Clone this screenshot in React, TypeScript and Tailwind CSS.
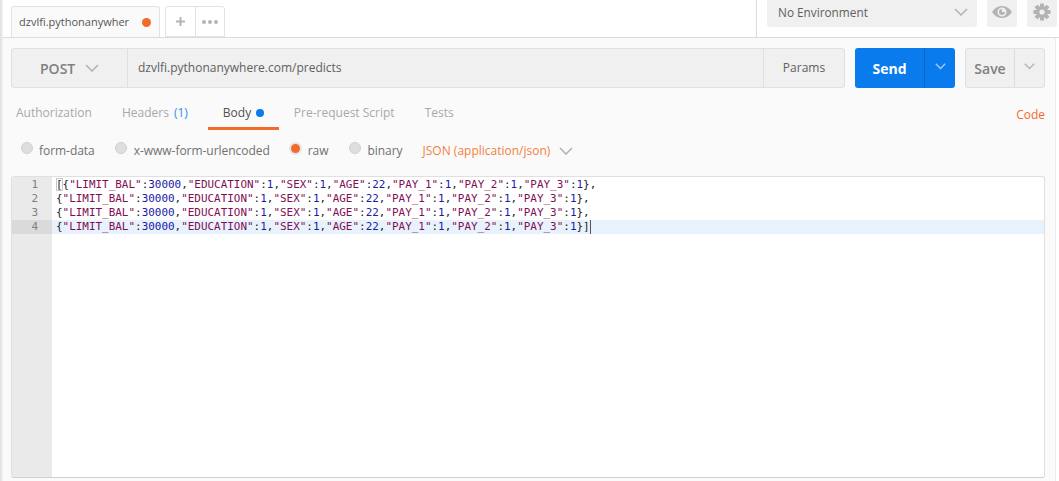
import React from "react";

function Chevron({ className = "", size = 14 }: { className?: string; size?: number }) {
  return (
    <svg width={size} height={size * 0.6} viewBox="0 0 14 8.4" className={className} fill="none" stroke="currentColor" strokeWidth="1.6">
      <path d="M1 1l6 6 6-6" />
    </svg>
  );
}

function Eye() {
  return (
    <svg width="20" height="12" viewBox="0 0 20 12" className="text-[#b3b3b3]">
      <path fill="currentColor" fillRule="evenodd" d="M10 0c4.500 0 8 3 10 6-2 3-5.500 6-10 6S2 9 0 6c2-3 5.500-6 10-6zm0 1.500A4.500 4.500 0 1 0 10 10.500 4.500 4.500 0 0 0 10 1.500z" />
      <path fill="currentColor" d="M10 3a3 3 0 1 0 3 3h-3z" />
    </svg>
  );
}

function Gear() {
  const teeth = [0, 45, 90, 135];
  return (
    <svg width="18" height="18" viewBox="0 0 18 18" className="text-[#b3b3b3]">
      {teeth.map((a) => (
        <rect key={a} x="7" y="0.500" width="4" height="17" rx="0.500" fill="currentColor" transform={`rotate(${a} 9 9)`} />
      ))}
      <circle cx="9" cy="9" r="6" fill="currentColor" />
      <circle cx="9" cy="9" r="2.600" fill="#f0f0f0" />
    </svg>
  );
}

function Radio({ label, on = false, className = "" }: { label: string; on?: boolean; className?: string }) {
  return (
    <div className={`flex items-center ${className}`}>
      {on ? (
        <span className="w-[13px] h-[13px] rounded-full bg-[#f26b2a] border-[2px] border-[#e5e5e5] mb-[6px] -ml-[1px]" />
      ) : (
        <span className="w-[12px] h-[12px] rounded-full bg-[#dedede] border border-[#cfcfcf] mb-[6px]" />
      )}
      <span className="ml-[6px] text-[12px] tracking-[-0.04px] text-[#707070]">{label}</span>
    </div>
  );
}

const S = ({ children }: { children: React.ReactNode }) => <span className="text-[#7f0f55]">{children}</span>;
const N = ({ children }: { children: React.ReactNode }) => <span className="text-[#1a1aa6]">{children}</span>;

function CodeObject() {
  return (
    <>
      {"{"}
      <S>"LIMIT_BAL"</S>:<N>30000</N>,<S>"EDUCATION"</S>:<N>1</N>,<S>"SEX"</S>:<N>1</N>,<S>"AGE"</S>:<N>22</N>,<S>"PAY_1"</S>:<N>1</N>,<S>"PAY_2"</S>:<N>1</N>,<S>"PAY_3"</S>:<N>1</N>
      {"}"}
    </>
  );
}

function Tab({ label, active = false, className = "px-[14px]", children }: { label: string; active?: boolean; className?: string; children?: React.ReactNode }) {
  return (
    <div className={`h-[30px] flex items-start pt-[4px] text-[12px] whitespace-nowrap border-b-[3px] ${className} ${active ? "border-[#f26b2a] text-[#505050]" : "border-transparent text-[#a9a9a9]"}`}>
      {label}
      {children}
    </div>
  );
}

export default function App() {
  return (
    <div className="relative w-[1059px] h-[481px] overflow-hidden bg-white flex flex-col text-[#505050] [font-family:'Open_Sans',sans-serif]">
      <div className="absolute left-0 top-0 bottom-0 w-[3px] bg-gradient-to-r from-[#dedede] to-[#f4f4f4] z-10" />

      {/* top bar */}
      <div className="h-[38px] shrink-0 flex border-b border-[#dcdcdc] pl-[11px]">
        <div className="mt-[6px] w-[149px] h-[31px] bg-[#fafafa] border border-b-0 border-[#e2e2e2] rounded-t-[3px] flex items-center pl-[7px] pr-[8px] justify-between">
          <span className="text-[11px] text-[#555555]">dzvlfi.pythonanywher</span>
          <span className="w-[9px] h-[9px] rounded-full bg-[#f26b2a]" />
        </div>
        <div className="mt-[6px] ml-[5px] h-[31px] w-[60px] flex border border-[#e2e2e2] rounded-t-[3px] bg-white">
          <div className="w-[30px] border-r border-[#e2e2e2] flex items-center justify-center text-[#aaaaaa]">
            <svg width="9" height="9" viewBox="0 0 9 9"><path d="M3.500 0h2v3.500H9v2H5.500V9h-2V5.500H0v-2h3.500z" fill="#b5b5b5" /></svg>
          </div>
          <div className="flex-1 flex items-center justify-center gap-[2px]">
            <span className="w-[4px] h-[4px] rounded-full bg-[#b5b5b5]" />
            <span className="w-[4px] h-[4px] rounded-full bg-[#b5b5b5]" />
            <span className="w-[4px] h-[4px] rounded-full bg-[#b5b5b5]" />
          </div>
        </div>
        <div className="ml-auto flex h-full border-l border-[#dcdcdc] pl-[10px] pr-[2px] gap-[10px]">
          <div className="w-[210px] h-[27px] bg-[#f0f0f0] rounded-b-[3px] flex items-center justify-between pl-[11px] pr-[9px]">
            <span className="text-[11.800px] text-[#606060] pb-[1px]">No Environment</span>
            <Chevron className="text-[#b3b3b3] mb-[2px]" />
          </div>
          <div className="w-[30px] h-[27px] bg-[#f0f0f0] rounded-b-[3px] flex items-center justify-center pb-[3px]"><Eye /></div>
          <div className="w-[30px] h-[27px] bg-[#f0f0f0] rounded-b-[3px] flex items-center justify-center pb-[3px]"><Gear /></div>
        </div>
      </div>

      {/* main */}
      <div className="flex-1 min-h-0 bg-[#fafafa] mr-[3px] border-r border-[#ececec] flex flex-col">
        {/* url row */}
        <div className="h-[40px] mt-[10px] ml-[11px] mr-[10px] shrink-0 flex">
          <div className="flex-1 flex bg-[#f0f0f0] border border-[#e0e0e0] rounded-[3px] h-full">
            <div className="w-[116px] border-r border-[#e0e0e0] flex items-center pl-[28px] gap-[10px]">
              <span className="text-[14px] font-semibold text-[#808080]">POST</span>
              <Chevron className="text-[#b3b3b3]" />
            </div>
            <div className="flex-1 flex items-center pl-[10px] text-[12px] text-[#606060]">dzvlfi.pythonanywhere.com/predicts</div>
            <div className="w-[81px] border-l border-[#e0e0e0] flex items-center justify-center text-[12px] text-[#606060]">Params</div>
          </div>
          <div className="ml-[10px] w-[100px] h-full flex bg-[#097bed] rounded-[3px] text-white">
            <div className="w-[70px] flex items-center justify-center text-[14px] font-bold border-r border-[#0a66c2]">Send</div>
            <div className="flex-1 flex items-center justify-center pb-[3px]"><Chevron className="text-[#a8cdf5]" size={11} /></div>
          </div>
          <div className="ml-[10px] w-[80px] h-full flex bg-[#f0f0f0] border border-[#e0e0e0] rounded-[3px]">
            <div className="w-[49px] flex items-center justify-center text-[14px] font-semibold text-[#808080] border-r border-[#dcdcdc]">Save</div>
            <div className="flex-1 flex items-center justify-center pb-[3px]"><Chevron className="text-[#b3b3b3]" size={11} /></div>
          </div>
        </div>

        {/* tabs */}
        <div className="h-[32px] mt-[10px] shrink-0 flex items-end pl-[2px] pr-[10px]">
          <Tab label="Authorization" />
          <div className="ml-[2px]">
            <Tab label="Headers">
              <span className="ml-[5px] text-[#2f8ff0]">(1)</span>
            </Tab>
          </div>
          <div className="ml-[6px] w-[71px]">
            <Tab label="Body" active className="pl-[15px]">
              <span className="ml-[5px] mt-[5px] w-[8px] h-[8px] rounded-full bg-[#097bed]" />
            </Tab>
          </div>
          <div className="ml-[1px]"><Tab label="Pre-request Script" /></div>
          <div className="ml-[2px]"><Tab label="Tests" /></div>
          <span className="ml-auto self-start pt-[8px] text-[12px] text-[#f26b2a]">Code</span>
        </div>

        {/* body type row */}
        <div className="h-[46px] shrink-0 flex items-center pl-[21px] pb-[4px]">
          <Radio label="form-data" />
          <Radio label="x-www-form-urlencoded" className="ml-[20px] [&>span:last-child]:ml-[7px]" />
          <Radio label="raw" on className="ml-[20px]" />
          <Radio label="binary" className="ml-[21px]" />
          <span className="ml-[20px] text-[12px] text-[#f2813f]">JSON (application/json)</span>
          <Chevron className="ml-[9px] text-[#b3b3b3]" />
        </div>

        {/* editor */}
        <div className="ml-[11px] mr-[10px] h-[302px] shrink-0 bg-white border border-[#e0e0e0] border-b-[#d0d0d0] rounded-[3px] flex overflow-hidden">
          <div className="w-[40px] bg-[#eaeaea] pt-[1px] shrink-0 text-[11px] leading-[14px] text-[#808080] text-right font-['DejaVu_Sans_Mono',monospace]">
            <div className="h-[14px] pr-[14px]">1</div>
            <div className="h-[14px] pr-[14px]">2</div>
            <div className="h-[14px] pr-[14px]">3</div>
            <div className="h-[14px] pr-[14px] bg-[#dadada]">4</div>
          </div>
          <div className="flex-1 pt-[1px] text-[10.950px] leading-[14px] text-[#222222] font-['DejaVu_Sans_Mono',monospace] whitespace-pre">
            <div className="h-[14px] pl-[4px]">
              <span className="outline outline-1 -outline-offset-1 outline-[#c8c8c8]">[</span>
              <CodeObject />,
            </div>
            <div className="h-[14px] pl-[4px]"><CodeObject />,</div>
            <div className="h-[14px] pl-[4px]"><CodeObject />,</div>
            <div className="h-[14px] pl-[4px] bg-[#e8f2fd]">
              <CodeObject />]<span className="inline-block w-[1px] h-[14px] align-top bg-[#555555]" />
            </div>
          </div>
        </div>
      </div>
    </div>
  );
}
